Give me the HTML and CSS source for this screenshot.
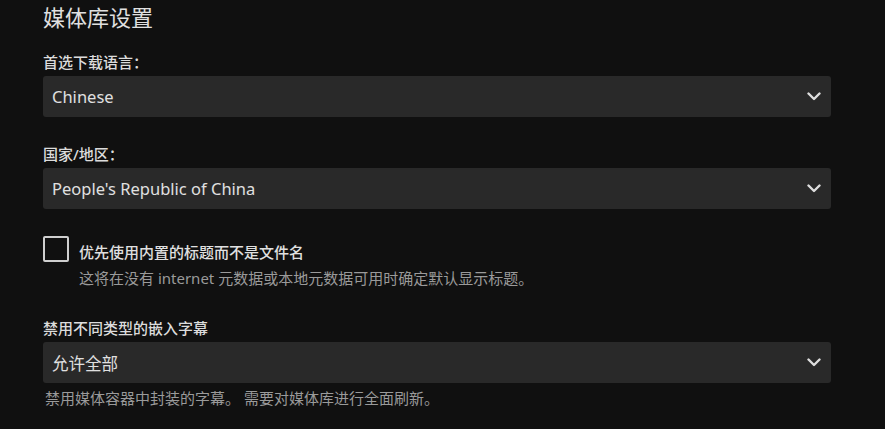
FILE: index.html
```html
<!DOCTYPE html>
<html lang="zh-CN">
<head>
<meta charset="utf-8">
<title>媒体库设置</title>
<link rel="stylesheet" href="styles.css">
</head>
<body>
<div class="page">
  <h2 class="title">媒体库设置</h2>

  <div class="field field-first">
    <label class="label">首选下载语言<span class="punct">：</span></label>
    <div class="select">
      <span class="select-value">Chinese</span>
      <svg class="chevron" width="14" height="9" viewBox="0 0 14 9"><polyline points="1.5,1.5 7,7 12.5,1.5" fill="none" stroke="currentColor" stroke-width="2.4" stroke-linecap="round" stroke-linejoin="round"/></svg>
    </div>
  </div>

  <div class="field">
    <label class="label">国家/地区<span class="punct">：</span></label>
    <div class="select">
      <span class="select-value">People's Republic of China</span>
      <svg class="chevron" width="14" height="9" viewBox="0 0 14 9"><polyline points="1.5,1.5 7,7 12.5,1.5" fill="none" stroke="currentColor" stroke-width="2.4" stroke-linecap="round" stroke-linejoin="round"/></svg>
    </div>
  </div>

  <div class="check-field">
    <div class="check-row">
      <span class="checkbox"></span>
      <span class="check-label">优先使用内置的标题而不是文件名</span>
    </div>
    <div class="check-desc">这将在没有 internet 元数据或本地元数据可用时确定默认显示标题<span class="punct">。</span></div>
  </div>

  <div class="field field-last">
    <label class="label">禁用不同类型的嵌入字幕</label>
    <div class="select">
      <span class="select-value">允许全部</span>
      <svg class="chevron" width="14" height="9" viewBox="0 0 14 9"><polyline points="1.5,1.5 7,7 12.5,1.5" fill="none" stroke="currentColor" stroke-width="2.4" stroke-linecap="round" stroke-linejoin="round"/></svg>
    </div>
    <div class="field-desc">禁用媒体容器中封装的字幕<span class="punct">。</span> 需要对媒体库进行全面刷新<span class="punct">。</span></div>
  </div>
</div>
</body>
</html>
```

FILE: styles.css
```css
html, body {
  margin: 0;
  padding: 0;
  background: #101010;
}

body {
  font-family: "Noto Sans", "Noto Sans CJK SC", sans-serif;
  color: #dddddd;
}

.page {
  padding: 3px 54px 0 43px;
}

.title {
  margin: 0;
  font-size: 22px;
  font-weight: 400;
  line-height: 28px;
  color: #e0e0e0;
}

.punct {
  font-family: "Noto Sans CJK TC", sans-serif;
}

.field {
  margin-top: 27px;
}

.field-first {
  margin-top: 21px;
}

.field-last {
  margin-top: 30px;
}

.label {
  display: block;
  font-size: 15px;
  line-height: 20px;
  font-weight: 500;
  color: #dcdcdc;
  margin-bottom: 4px;
}

.select {
  display: flex;
  align-items: center;
  justify-content: space-between;
  height: 41px;
  padding: 0 10px 0 9px;
  background: #292929;
  border-radius: 3px;
  box-sizing: border-box;
}

.select-value {
  font-size: 16.5px;
  color: #e0e0e0;
}

.chevron {
  color: #dddddd;
  display: block;
}

.check-field {
  margin-top: 27px;
}

.check-row {
  display: flex;
  align-items: flex-start;
}

.checkbox {
  width: 26px;
  height: 26px;
  box-sizing: border-box;
  border: 2px solid #cfcfcf;
  border-radius: 2px;
  flex: none;
}

.check-label {
  margin-left: 10px;
  padding-top: 6px;
  font-size: 15px;
  line-height: 20px;
  font-weight: 500;
  color: #e0e0e0;
}

.check-desc {
  margin-left: 36px;
  margin-top: 6px;
  font-size: 15px;
  line-height: 20px;
  color: #9a9a9a;
}

.field-desc {
  margin-top: 5px;
  padding-left: 2px;
  font-size: 15px;
  line-height: 20px;
  color: #9a9a9a;
}
```
